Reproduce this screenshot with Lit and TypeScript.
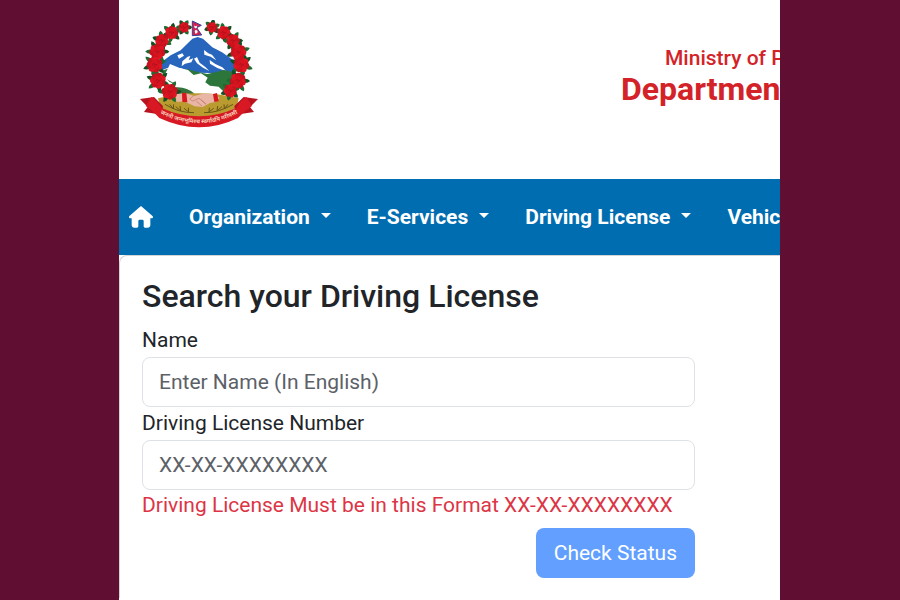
import { LitElement, html, css, svg } from "lit";
import { customElement } from "lit/decorators.js";

const flowers: [number, number, number][] = [
  [162, 50, 17], [125, 66, 21], [96, 90, 21], [82, 123, 25], [74, 162, 25], [84, 210, 25], [119, 243, 25],
  [246, 50, 17], [281, 66, 21], [309, 90, 21], [325, 124, 25], [334, 162, 25], [324, 210, 25], [301, 240, 21],
];

const leafSprays = ([x, y, r]: [number, number, number], i: number) =>
  [0, 1, 2, 3, 4, 5].map((n) => {
    const a = (n * Math.PI) / 3 + i * 0.7;
    const c = Math.cos(a);
    const s = Math.sin(a);
    const l = r * 1.45;
    return svg`<path fill=${n % 2 ? "#1d6b31" : "#125024"} d="M${x} ${y}Q${x + c * r - s * 13} ${y + s * r + c * 13} ${x + c * l} ${y + s * l}Q${x + c * r + s * 13} ${y + s * r - c * 13} ${x} ${y}Z" />`;
  });

const flower = ([x, y, r]: [number, number, number], i: number) => {
  const petals = [0, 1, 2, 3, 4, 5, 6].map((n) => {
    const a = (n * Math.PI * 2) / 7 + i;
    return svg`<circle cx=${x + Math.cos(a) * r * 0.56} cy=${y + Math.sin(a) * r * 0.56} r=${r * 0.4} fill=${n % 2 ? "#dd1621" : "#c9121d"} />`;
  });
  return svg`${petals}<circle cx=${x} cy=${y} r=${r * 0.55} fill="#d5141f" />
    <path d="M${x - 8} ${y + 1}l6-5 3 6 7-4M${x - 3} ${y + 8}l4-5" fill="none" stroke="#9b0f1e" stroke-width="2" />`;
};

@customElement("national-emblem")
export class NationalEmblem extends LitElement {
  static styles = css`
    :host { display: block; flex: none; }
    .emblem { display: block; width: 118px; height: 108px; }
    .motto { font: 700 17px "Noto Sans", sans-serif; fill: #f6cdb8; }
  `;
  render() {
    return html`<svg class="emblem" viewBox="30 28 354 324" role="img" aria-label="Emblem of Nepal">
      <path fill="#fff" d="M95 165 204 76 315 150 300 275H110z" />
      <path fill="#2865bd" d="M90 158 122 134 152 119 187 84 203 79 219 84 247 110 276 125 318 154 316 190 244 187 196 186 150 172 112 172 92 180z" />
      <path fill="#fff" d="M142 134l15-6 5 7-15 9zM157 152l16-14 8-2-5 12 14-5-6 12-19 4-10 8zM192 144l9-5 8 17 17 13 12 12-19-10-18-13zM222 118l13 10 11 4 13 17-17-11-19-6zM239 148l17 12 21 10 12 12-27-10-22-13z" />
      <path fill="#2d763b" d="M92 182 126 170 150 176 174 176 204 184 232 190 258 184 282 178 314 185 320 226 296 246 272 256 235 251 202 226 150 228 118 213z" />
      <path fill="#fff" d="M120 160 149 172 174 178 191 193 213 188 233 201 226 215 240 225 266 228 280 242 283 260 248 257 218 251 194 254 166 247 146 237 132 218 108 204 107 187z" />
      <path fill="#34733c" d="M134 230q34-4 60 19l-32 5-28-5z" />
      <path fill="#b99b2f" d="M84 263q120-30 242 0l-8 38q-110 48-224 0z" />
      <path fill="none" stroke="#675616" stroke-width="3" d="M105 281q42 26 87 25M309 281q-43 26-87 25M119 281l11 13 1-13M137 288l15 12-2-14M162 293l14 11-1-13M294 281l-11 13-1-13M276 288l-15 12 2-14M251 293l-14 11 1-13" />
      <path fill="#e9b5a4" d="M137 251 166 247 192 256 218 249 246 249 269 261 257 274 240 277 218 289 194 287 165 273 139 273z" />
      <path fill="none" stroke="#bc7767" stroke-width="2" d="M190 256l-11 9 9 6 19-8 21 17M214 268l14 13M199 272l17 14" />
      <path fill="#d71920" d="M156 247l13-1 3 29-15-1zM249 250l12-3 5 25-13 2z" />
      ${flowers.map(leafSprays)}
      ${flowers.map(flower)}
      <path fill="#b81420" d="M30 265l42-6 27 27-3 26-54-8 11-15zM384 265l-43-6-28 27 4 26 55-8-12-15z" />
      <path fill="#d81924" d="M64 259q16 10 31 33 111 50 224 0 15-25 30-33l17 27q-24 16-42 36-116 56-236 0-18-22-41-36z" />
      <path id="motto-line" fill="none" d="M82 304q125 68 250 0" />
      <text class="motto"><textPath href="#motto-line" startOffset="50%" text-anchor="middle">जननी जन्मभूमिश्च स्वर्गादपि गरीयसी</textPath></text>
      <path fill="#d4204a" stroke="#34419b" stroke-width="3" d="M187 31 214 44 200 51 215 73 187 75z" />
      <path fill="#fff" d="M192 44q5 6 10 0-1 9-5 9t-5-9zM194 61l4-4 5 4-1 6-6 2z" />
    </svg>`;
  }
}

@customElement("app-root")
export class AppRoot extends LitElement {
  static styles = css`
    :host {
      display: block;
      box-sizing: border-box;
      min-height: 100vh;
      padding: 0 120px 0 119px;
      background: #610e33;
      color: #212529;
      font: 400 21px/33px Roboto, sans-serif;
    }
    * { box-sizing: border-box; }
    .page { min-height: 100vh; background: #fff; overflow: hidden; }
    .header { display: flex; gap: 363px; height: 179px; padding: 20px 21px 0; }
    .titles { flex: none; padding-top: 26px; color: #d32329; white-space: nowrap; }
    .ministry { margin: 0; padding-left: 44px; font-size: 21px; line-height: 24px; font-weight: 500; }
    .department { margin: 0; font-size: 32px; line-height: 38px; font-weight: 700; }
    .nav { display: flex; align-items: center; gap: 36px; height: 76px; padding: 0 10px; background: #006db0; white-space: nowrap; }
    .home { flex: none; display: block; color: #fff; }
    .home svg { display: block; width: 24px; height: 22px; }
    .menu { flex: none; display: flex; align-items: center; gap: 11px; padding: 0; border: 0; background: none; color: #fff; font: 700 21px/32px Roboto, sans-serif; }
    .menu::after { content: ""; margin-bottom: 4px; border: 5px solid transparent; border-top-color: #fff; border-bottom: 0; }
    .panel { padding: 20px 22px; border-top: 1px solid #d3d4d6; border-left: 1px solid #d3d4d6; border-top-left-radius: 8px; }
    .form { display: flex; flex-direction: column; max-width: 553px; }
    .heading { margin: 0 0 8px; font-size: 32px; line-height: 40px; font-weight: 500; }
    .field { width: 100%; height: 50px; padding: 0 16px; border: 1px solid #dee2e6; border-radius: 8px; background: #fff; color: #212529; font: inherit; }
    .field::placeholder { color: #5c6167; opacity: 1; }
    .hint { margin: 0 0 8px; color: #dc3545; line-height: 30px; }
    .submit { align-self: flex-end; height: 50px; padding: 0 18px; border: 0; border-radius: 8px; background: #629fff; color: #fff; font: inherit; }
  `;

  private menus = ["Organization", "E-Services", "Driving License", "Vehicle"];

  render() {
    return html`<div class="page">
      <header class="header">
        <national-emblem></national-emblem>
        <div class="titles">
          <p class="ministry">Ministry of Physical Infrastructure and Transport</p>
          <p class="department">Department of Transport Management</p>
        </div>
      </header>
      <nav class="nav">
        <a class="home" href="#" aria-label="Home">
          <svg viewBox="0 0 576 512"><path fill="currentColor" d="M576 256c0 18-15 32-32 32h-32l1 160c0 36-28 64-64 64h-65c-18 0-32-14-32-32V352c0-18-14-32-32-32h-64c-18 0-32 14-32 32v128c0 18-14 32-32 32h-64c-36 0-64-28-64-64V288H32c-18 0-32-14-32-32 0-9 3-17 10-24L266 8c14-11 30-11 43 0l255 224c8 7 12 15 12 24z" /></svg>
        </a>
        ${this.menus.map((m) => html`<button class="menu" type="button">${m}</button>`)}
      </nav>
      <main class="panel">
        <form class="form">
          <h1 class="heading">Search your Driving License</h1>
          <label for="name">Name</label>
          <input class="field" id="name" type="text" placeholder="Enter Name (In English)" />
          <label for="license">Driving License Number</label>
          <input class="field" id="license" type="text" placeholder="XX-XX-XXXXXXXX" aria-describedby="hint" />
          <p class="hint" id="hint">Driving License Must be in this Format XX-XX-XXXXXXXX</p>
          <button class="submit" type="button">Check Status</button>
        </form>
      </main>
    </div>`;
  }
}
